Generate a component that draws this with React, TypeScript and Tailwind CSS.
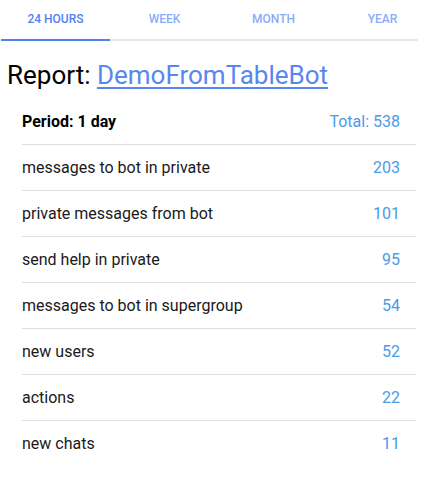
import React from "react";

const rows: [string, number][] = [
  ["messages to bot in private", 203],
  ["private messages from bot", 101],
  ["send help in private", 95],
  ["messages to bot in supergroup", 54],
  ["new users", 52],
  ["actions", 22],
  ["new chats", 11],
];

const tabs = ["24 Hours", "Week", "Month", "Year"];

export default function App() {
  return (
    <div className="w-[421px] h-[484px] bg-white overflow-hidden" style={{ fontFamily: "Roboto, 'Liberation Sans', sans-serif" }}>
      <div className="ml-[1px] w-[417px] overflow-hidden flex">
        {tabs.map((t, i) => (
          <div
            key={t}
            className={
              i === 0
                ? "w-[109px] shrink-0 h-[41px] flex items-center justify-center pb-[1px] border-b-2 border-[#5282f2] text-[12px] font-medium uppercase text-[#5282f2]"
                : "w-[109px] shrink-0 h-[41px] flex items-center justify-center pb-[1px] border-b-2 border-[#e8e8e8] text-[12px] font-medium uppercase text-[#8aacf8]"
            }
          >
            {t}
          </div>
        ))}
      </div>
      <h1 className="mt-[18px] ml-[7px] text-[26px] leading-[32px] text-black">
        Report: <a className="text-[#5887f0] underline underline-offset-[3px]" href="#">DemoFromTableBot</a>
      </h1>
      <div className="mt-[8px] ml-[22px] w-[394px]">
        <div className="h-[46px] flex items-center justify-between pr-4 border-b border-[#dddddd] text-[16px]">
          <span className="font-bold text-black">Period: 1 day</span>
          <span className="text-[#4a9be9]">Total: 538</span>
        </div>
        {rows.map(([label, v], i) => (
          <div
            key={label}
            className={
              i < rows.length - 1
                ? "h-[46px] flex items-center justify-between pr-4 border-b border-[#dddddd] text-[16px]"
                : "h-[46px] flex items-center justify-between pr-4 text-[16px]"
            }
          >
            <span className="text-[#1a1a1a]">{label}</span>
            <span className="text-[#4a9be9]">{v}</span>
          </div>
        ))}
      </div>
    </div>
  );
}
